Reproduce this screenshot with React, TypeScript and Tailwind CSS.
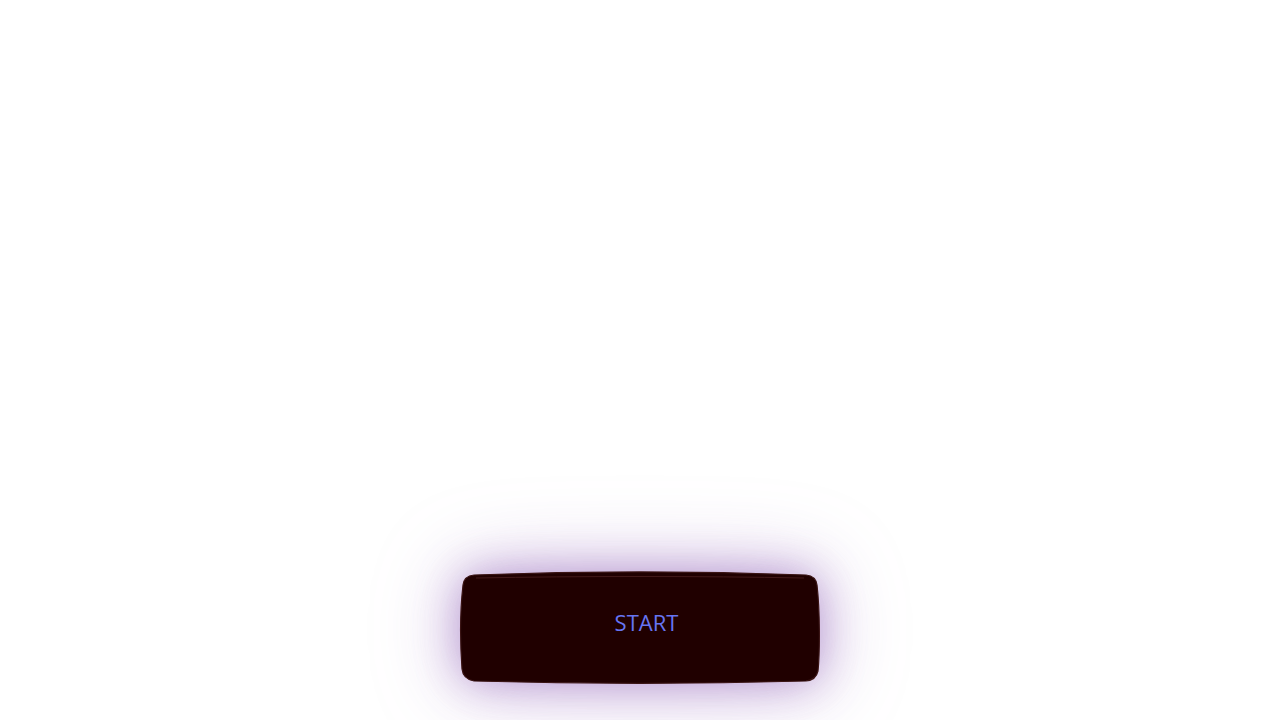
import React from "react";

export default function App() {
  return (
    <div className="w-full h-[720px] bg-white flex flex-col items-center justify-end pb-[37px]">
      <div className="relative w-[360px] h-[112px]">
        <svg
          className="absolute inset-0 overflow-visible [filter:drop-shadow(0_0_22px_rgba(125,70,170,0.45))_drop-shadow(0_0_40px_rgba(140,90,180,0.35))]"
          width="360"
          height="112"
          viewBox="0 0 360 112"
        >
          <path
            d="M 14 4 C 120 0, 240 0, 346 4 Q 356 5 357 14 C 360 40, 360 80, 358 100 Q 356 109 346 110 C 240 113, 120 113, 14 110 Q 3 108 2 98 C 0 70, 0 40, 3 14 Q 4 5 14 4 Z"
            fill="#200000"
            stroke="#3a1414"
            strokeWidth="1.2"
          />
          <path
            d="M 16 7 C 120 5, 240 5, 344 7"
            fill="none"
            stroke="#4a2020"
            strokeWidth="0.8"
          />
        </svg>
        <div className="relative h-full flex items-center justify-center pl-[13px] pb-[10px]">
          <span className="text-[22px] text-[#6674f2] font-['Open_Sans',sans-serif] leading-none">
            START
          </span>
        </div>
      </div>
    </div>
  );
}
